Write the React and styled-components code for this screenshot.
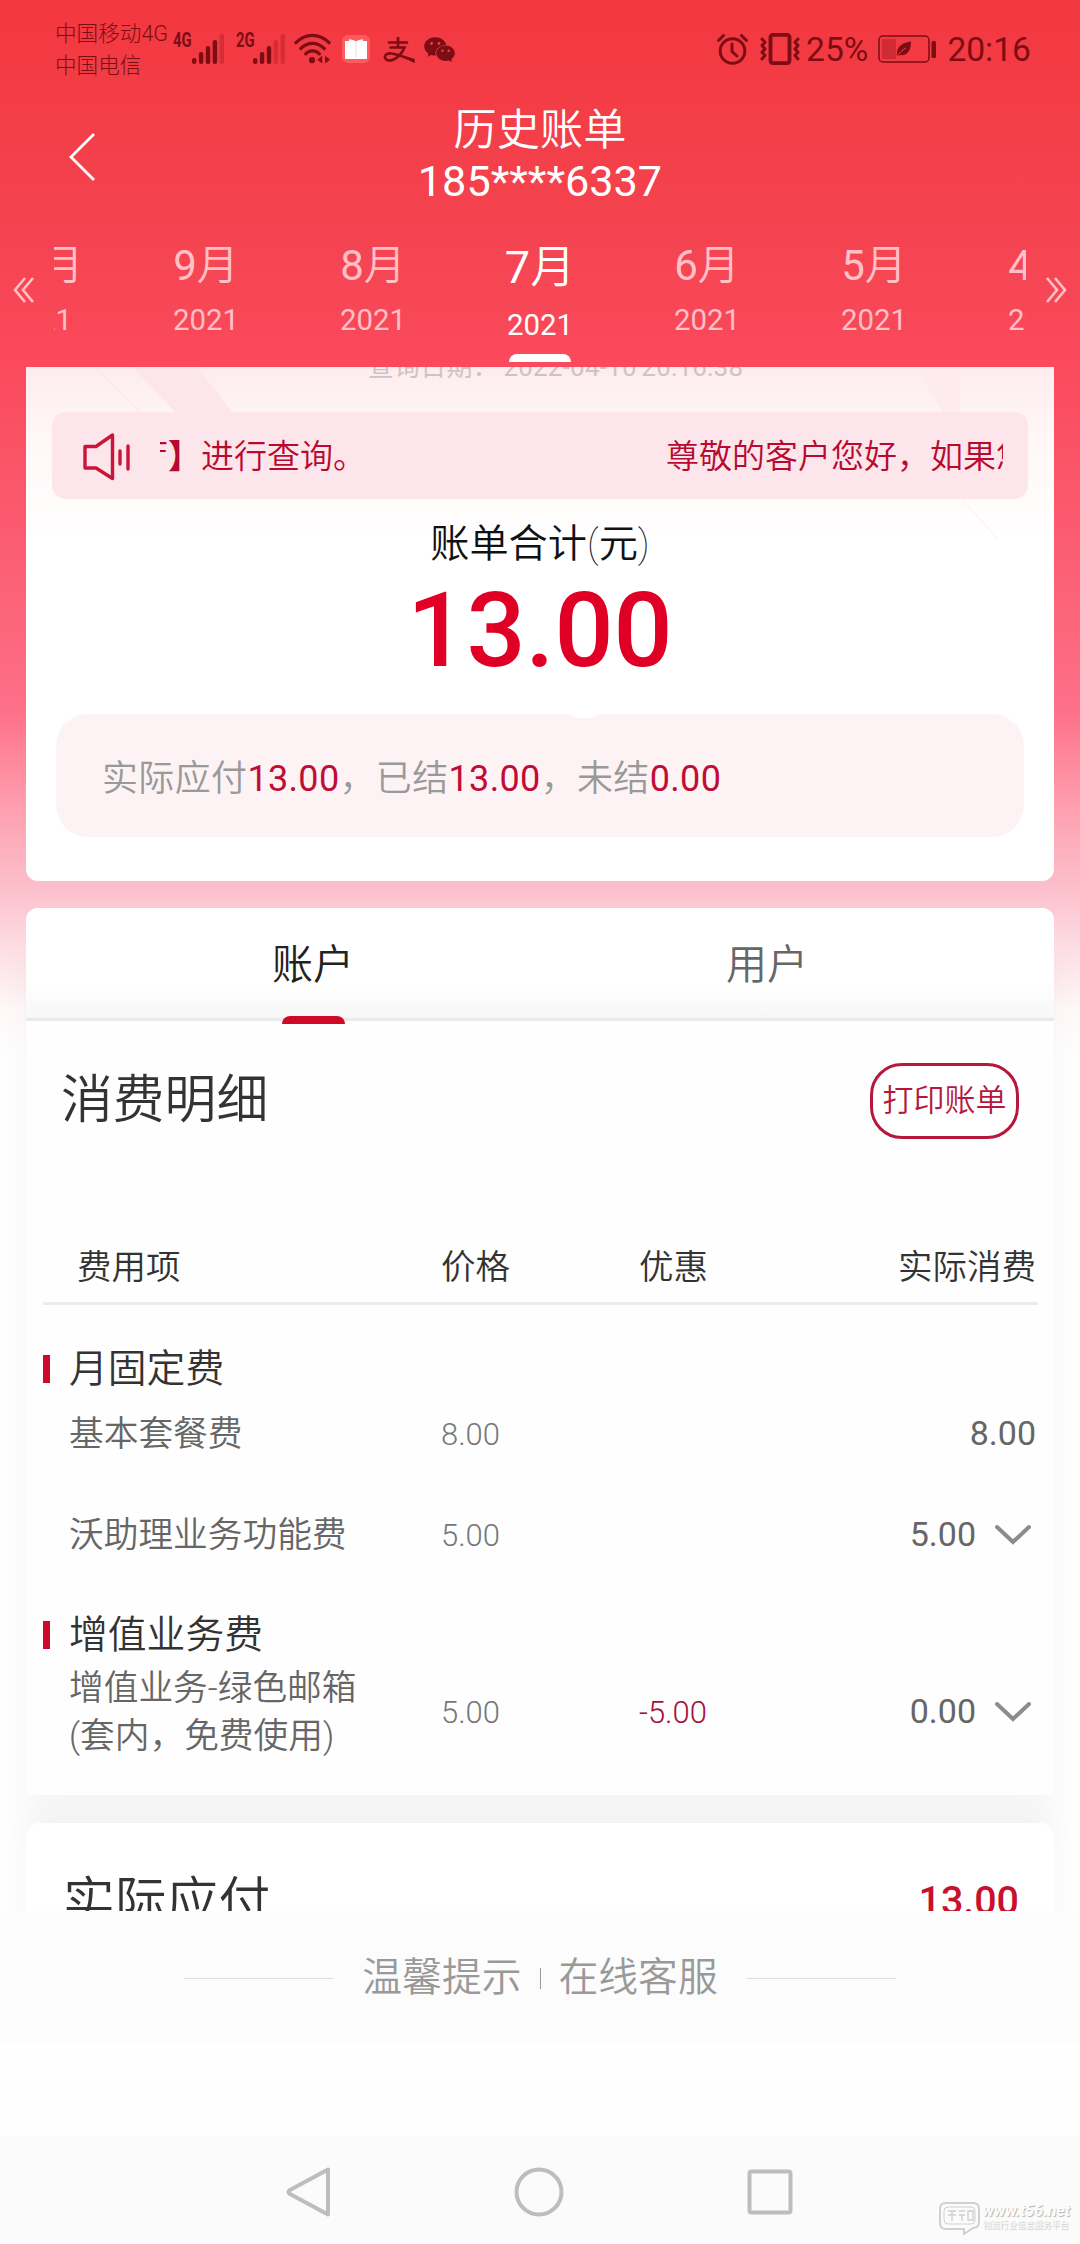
import React, { useState } from "react";
import styled, { createGlobalStyle } from "styled-components";
import { AiFillWechat } from "react-icons/ai";

const months = [
  { id: 10, year: "2021" },
  { id: 9, year: "2021" },
  { id: 8, year: "2021" },
  { id: 7, year: "2021" },
  { id: 6, year: "2021" },
  { id: 5, year: "2021" },
  { id: 4, year: "2021" },
];

const groups = [
  {
    name: "月固定费",
    rows: [
      { name: ["基本套餐费"], price: "8.00", off: "", real: "8.00", height: 80 },
      { name: ["沃助理业务功能费"], price: "5.00", off: "", real: "5.00", more: true, height: 122 },
    ],
  },
  {
    name: "增值业务费",
    rows: [
      {
        name: ["增值业务-绿色邮箱", "(套内，免费使用)"],
        price: "5.00",
        off: "-5.00",
        real: "0.00",
        more: true,
        height: 104,
      },
    ],
  },
];

function Signal({ on }) {
  return (
    <svg width="32" height="30" viewBox="0 0 32 30">
      {[6, 12, 18, 24, 30].map((h, i) => (
        <rect
          key={h}
          x={i * 6.9}
          y={30 - h}
          width="4.400"
          height={h}
          rx="2"
          fill="#7c0d14"
          opacity={i < on ? 1 : 0.25}
        />
      ))}
    </svg>
  );
}

function StatusBar() {
  return (
    <Status>
      <Carriers>
        <span>中国移动4G</span>
        <span>中国电信</span>
      </Carriers>
      <Net>4G</Net>
      <Signal on={4} />
      <Net $left={12}>2G</Net>
      <Signal on={3} />
      <WifiIcon width="37" height="32" viewBox="0 0 38 32" fill="none" stroke="#7c0d14" strokeWidth="3.4" strokeLinecap="round">
        <path d="M2 9.5C12-.5 26-.5 36 9.5" />
        <path d="M7 15.5c7-7 17-7 24 0" />
        <path d="M12 21c4-4 10-4 14 0" />
        <circle cx="18.5" cy="27.5" r="3.2" fill="#7c0d14" stroke="none" />
        <path d="M29 23v8l-5-4zM32 23l5 4-5 4z" fill="#7c0d14" stroke="none" />
      </WifiIcon>
      <BookIcon width="28" height="28" viewBox="0 0 28 28">
        <rect width="28" height="28" rx="6" fill="#fb5a5f" />
        <path d="M3 6h4V4.500c3 0 5 .5 7 2 2-1.500 4-2 7-2V6h4v18H3z" fill="#fff" />
        <path d="M14 6.500V23" stroke="#f9d5d9" strokeWidth="1" />
      </BookIcon>
      <PayIcon width="32" height="26" viewBox="0 0 32 26" fill="none" stroke="#7c0d14" strokeWidth="2.6" strokeLinecap="round">
        <path d="M6 5.500h18M15 1v9M7.500 10.500h14C19 17 13 23 7 23.500c-7 .3-7-8 1.500-7 7 1 13 4 21 6.500" />
        <path d="M19 19l12 3.500v2.500z" fill="#7c0d14" strokeWidth="1.500" />
      </PayIcon>
      <AiFillWechat size={35} color="#7c0d14" />
      <Spacer />
      <svg width="31" height="31" viewBox="0 0 31 31" fill="none" stroke="#7c0d14" strokeWidth="3" strokeLinecap="round">
        <circle cx="15.500" cy="17" r="12.300" />
        <path d="M15 10v7.500l5 4.500M1.500 6.500l5-5M29.500 6.500l-5-5" />
      </svg>
      <VibrateIcon width="42" height="32" viewBox="0 0 42 32" fill="none" stroke="#7c0d14" strokeWidth="3" strokeLinejoin="round" strokeLinecap="round">
        <rect x="11.500" y="1.800" width="19" height="28.400" rx="2.500" strokeWidth="3.800" />
        <path d="M3 6l3 3.300-3 3.300 3 3.400-3 3.300 3 3.300-3 3.300M39 6l-3 3.300 3 3.300-3 3.400 3 3.300-3 3.300 3 3.300" />
      </VibrateIcon>
      <Big>25%</Big>
      <BatteryIcon width="59" height="28" viewBox="0 0 59 28">
        <rect x="1" y="1" width="50" height="26" rx="4" fill="none" stroke="#7c0d14" strokeWidth="1.500" />
        <rect x="4" y="4" width="14" height="20" fill="#7c0d14" opacity=".3" />
        <path d="M19 22c-1-9 3-14 14-15.500C33 16 29 21 22 20z" fill="#7c0d14" />
        <path d="M19 22c2-4 5-7 9-9" stroke="#f3373f" strokeWidth="1" fill="none" />
        <rect x="53.500" y="6" width="4.500" height="17" rx="1.500" fill="#7c0d14" />
      </BatteryIcon>
      <Big>20:16</Big>
    </Status>
  );
}

function Arrow({ flip }) {
  return (
    <ArrowSvg $flip={flip} width="22" height="26" viewBox="0 0 22 26" fill="none" stroke="#ffc0c6" strokeWidth="2.600">
      <path d="M12 1L2 13l10 12M20 1L10 13l10 12" />
    </ArrowSvg>
  );
}

function FeeRow({ row }) {
  return (
    <Row $height={row.height}>
      <FeeName>
        {row.name.map((line) => (
          <div key={line}>{line}</div>
        ))}
      </FeeName>
      <Price>{row.price}</Price>
      <Price $red>{row.off}</Price>
      <Real $more={row.more}>
        {row.real}
        {row.more && (
          <svg width="38" height="24" viewBox="0 0 38 24" fill="none" stroke="#8c8c8c" strokeWidth="4" strokeLinecap="round">
            <path d="M3 5l16 15L35 5" />
          </svg>
        )}
      </Real>
    </Row>
  );
}

export default function App() {
  const [month, setMonth] = useState(7);
  const [tab, setTab] = useState("账户");

  return (
    <Page>
      <GlobalStyle />
      <StatusBar />
      <TitleBar>
        <BackIcon width="28" height="50" viewBox="0 0 28 50" fill="none" stroke="#fff" strokeWidth="2.800">
          <path d="M26 2L3 25l23 23" />
        </BackIcon>
        <Titles>
          <PageTitle>历史账单</PageTitle>
          <Phone>185****6337</Phone>
        </Titles>
      </TitleBar>

      <MonthBar>
        <Arrow />
        <MonthClip>
          <MonthTrack>
            {months.map((m) => (
              <Month key={m.id} $on={m.id === month} onClick={() => setMonth(m.id)}>
                <MonthName $on={m.id === month}>
                  <b>{m.id}</b>月
                </MonthName>
                <Year $on={m.id === month}>{m.year}</Year>
                {m.id === month && <MonthMark />}
              </Month>
            ))}
          </MonthTrack>
        </MonthClip>
        <Arrow flip />
      </MonthBar>

      <Scroll>
        <TotalCard>
          <Stripes width="1028" height="180" viewBox="0 0 1028 180">
            <path d="M107 0h64l35 45h-57z" fill="#fde6ea" />
            <path d="M70 0l44 46" stroke="#fbe3e7" fill="none" />
            <path d="M888 0h46v46h-16z" fill="#fdebef" />
            <path d="M936 132l36 40" stroke="#fbeef0" fill="none" />
          </Stripes>
          <QueryDate>查询日期： 2022-04-10 20:16:38</QueryDate>
          <Notice>
            <svg width="48" height="48" viewBox="0 0 48 48" fill="none" stroke="#cb1438" strokeWidth="3.400" strokeLinejoin="round" strokeLinecap="round">
              <path d="M2 13.500h11L29.500 2v43.500L13 35H2zM37 18v13M45 13v23" />
            </svg>
            <Marquee>
              <MarqueeEnd>
                厅<b>】</b>进行查询。
              </MarqueeEnd>
              <span>尊敬的客户您好，如果您</span>
            </Marquee>
          </Notice>
          <TotalLabel>
            账单合计<Thin>(</Thin>元<Thin>)</Thin>
          </TotalLabel>
          <Total>13.00</Total>
          <Summary>
            <Notch />
            实际应付<b>13.00</b>，已结<b>13.00</b>，未结<b>0.00</b>
          </Summary>
        </TotalCard>

        <DetailCard>
          <Tabs>
            {["账户", "用户"].map((t) => (
              <Tab key={t} $on={t === tab} onClick={() => setTab(t)}>
                <TabText>{t}</TabText>
                {t === tab && <TabMark />}
              </Tab>
            ))}
          </Tabs>
          <DetailHead>
            <Heading>消费明细</Heading>
            <PrintButton>打印账单</PrintButton>
          </DetailHead>
          <TableHead>
            <HeadName>费用项</HeadName>
            <span>价格</span>
            <span>优惠</span>
            <HeadReal>实际消费</HeadReal>
          </TableHead>
          {groups.map((g) => (
            <Group key={g.name}>
              <GroupName>{g.name}</GroupName>
              {g.rows.map((r) => (
                <FeeRow key={r.name[0]} row={r} />
              ))}
            </Group>
          ))}
        </DetailCard>

        <PayCard>
          <Heading>实际应付</Heading>
          <PayAmount>13.00</PayAmount>
        </PayCard>
      </Scroll>

      <Footer>
        <Line />
        <span>温馨提示</span>
        <Divider />
        <span>在线客服</span>
        <Line />
      </Footer>

      <NavBar>
        <svg width="46" height="52" viewBox="0 0 46 52" fill="none" stroke="#bdbdbd" strokeWidth="4" strokeLinejoin="round">
          <path d="M43 3.500v45L5 28q-3-2 0-4z" />
        </svg>
        <svg width="52" height="52" viewBox="0 0 52 52" fill="none" stroke="#bdbdbd" strokeWidth="4">
          <circle cx="26" cy="26" r="22.500" />
        </svg>
        <svg width="46" height="52" viewBox="0 0 46 52" fill="none" stroke="#bdbdbd" strokeWidth="4">
          <rect x="2.500" y="5.500" width="41" height="41" rx="2" />
        </svg>
        <Watermark>
          <svg width="44" height="36" viewBox="0 0 44 36" fill="none" stroke="#d0d0d0" strokeWidth="2">
            <path d="M8 2h27q6 0 6 6v13q0 6-6 6l-9 6v-5H8q-6 0-6-6V8q0-6 6-6z" />
            <rect x="6" y="6" width="31" height="17" rx="4" strokeWidth="1" />
            <path d="M10 10h8M14 10v10M10 14h8M21 10h6M21 14h6M24 14v6M30 10h5v9h-5z" strokeWidth="1.400" />
          </svg>
          <WaterText>
            <b>www.t56.net</b>
            <small>物流行业信息服务平台</small>
          </WaterText>
        </Watermark>
      </NavBar>
    </Page>
  );
}

const GlobalStyle = createGlobalStyle`
  * {
    box-sizing: border-box;
  }
  body {
    margin: 0;
    font-family: Roboto, "Noto Sans CJK SC", sans-serif;
    font-weight: 350;
  }
  svg {
    display: block;
    flex-shrink: 0;
  }
`;

const Page = styled.div`
  width: 1080px;
  height: 2244px;
  overflow: hidden;
  display: flex;
  flex-direction: column;
  background: linear-gradient(
      #f3373f 0,
      #f4434f 220px,
      #fa4a5c 366px,
      #fb5a6e 520px,
      #fd7088 710px,
      #fea0b0 810px,
      #fcc0cc 890px,
      #fddfe5 950px,
      #fff8f9 1010px,
      #fefefe 1060px
    )
    no-repeat #fefefe;
`;

const Status = styled.div`
  height: 98px;
  flex-shrink: 0;
  display: flex;
  align-items: center;
  padding: 0 49px 0 55px;
  color: #7c0d14;
`;

const Carriers = styled.div`
  display: flex;
  flex-direction: column;
  width: 118px;
  padding-top: 2px;
  font-size: 21.6px;
  line-height: 32px;
  font-weight: 300;
  white-space: nowrap;
`;

const Net = styled.span`
  width: ${(p) => (p.$left ? 17 : 19)}px;
  margin-left: ${(p) => p.$left || 0}px;
  align-self: flex-start;
  padding-top: 30px;
  font-size: 20px;
  line-height: 20px;
  font-weight: 700;
  transform: scaleX(0.74);
  transform-origin: left;
`;

const WifiIcon = styled.svg`
  margin-left: 9px;
`;

const BookIcon = styled.svg`
  margin-left: 11px;
`;

const PayIcon = styled.svg`
  margin: 2px 7px 0 13px;
`;

const Spacer = styled.div`
  flex: 1;
`;

const VibrateIcon = styled.svg`
  margin: 0 5px 0 11px;
`;

const Big = styled.span`
  font-size: 33.6px;
  font-weight: 400;
`;

const BatteryIcon = styled.svg`
  margin: 0 10px;
`;

const TitleBar = styled.div`
  height: 126px;
  flex-shrink: 0;
  display: flex;
  padding: 0 68px;
`;

const BackIcon = styled.svg`
  margin-top: 34px;
`;

const Titles = styled.div`
  flex: 1;
  margin-right: 28px;
  display: flex;
  flex-direction: column;
  align-items: center;
  color: #fff;
  font-size: 43.2px;
`;

const PageTitle = styled.div`
  padding-top: 4px;
  line-height: 58px;
`;

const Phone = styled.div`
  font-weight: 400;
  line-height: 44px;
`;

const MonthBar = styled.div`
  height: 143px;
  flex-shrink: 0;
  display: flex;
  padding: 0 13px;
  justify-content: space-between;
`;

const ArrowSvg = styled.svg`
  margin-top: 53px;
  transform: ${(p) => (p.$flip ? "scaleX(-1)" : "none")};
`;

const MonthClip = styled.div`
  width: 972px;
  overflow: hidden;
  display: flex;
  justify-content: center;
`;

const MonthTrack = styled.div`
  display: flex;
  flex-shrink: 0;
`;

const Month = styled.div`
  width: 167px;
  display: flex;
  flex-direction: column;
  align-items: center;
  padding-top: ${(p) => (p.$on ? 13 : 11)}px;
  color: ${(p) => (p.$on ? "#fff" : "#ffc0c6")};
`;

const MonthName = styled.div`
  font-size: ${(p) => (p.$on ? 45 : 42)}px;
  line-height: 62px;

  b {
    font-weight: 400;
  }
`;

const Year = styled.div`
  font-size: 29.4px;
  font-weight: 400;
  line-height: 40px;
  margin-top: ${(p) => (p.$on ? 6 : 3)}px;
`;

const MonthMark = styled.div`
  width: 62px;
  height: 8px;
  margin-top: 9px;
  border-radius: 8px 8px 0 0;
  background: #fff;
`;

const Scroll = styled.div`
  height: 1544px;
  flex-shrink: 0;
  overflow: hidden;
  padding: 0 26px;
`;

const TotalCard = styled.div`
  position: relative;
  height: 514px;
  padding: 0 26px;
  border-radius: 0 0 12px 12px;
  background: linear-gradient(#fdecef 0, #fff7f8 70px, #fffcfc 140px, #fff 170px);
`;

const Stripes = styled.svg`
  position: absolute;
  top: 0;
  left: 0;
`;

const QueryDate = styled.div`
  position: relative;
  height: 45px;
  padding-left: 31px;
  overflow: hidden;
  text-align: center;
  font-size: 26px;
  font-weight: 400;
  letter-spacing: 0.2px;
  word-spacing: -2px;
  line-height: 0;
  color: #cdc3c5;
`;

const Notice = styled.div`
  position: relative;
  height: 87px;
  display: flex;
  align-items: center;
  padding: 2px 25px 0 31px;
  border-radius: 14px;
  background: #fde6eb;
`;

const Marquee = styled.div`
  flex: 1;
  margin-left: 29px;
  overflow: hidden;
  white-space: nowrap;
  font-size: 33px;
  line-height: 50px;
  color: #b80a30;
  display: flex;

  span {
    flex-shrink: 0;
  }
`;

const MarqueeEnd = styled.span`
  width: 531px;
  margin-left: -25px;

  b {
    font-weight: 900;
  }
`;

const TotalLabel = styled.div`
  margin-top: 17px;
  text-align: center;
  font-size: 39.2px;
  line-height: 56px;
  color: #111;
`;

const Thin = styled.span`
  font-weight: 100;
`;

const Total = styled.div`
  margin-top: -1px;
  text-align: center;
  font-size: 104px;
  font-weight: 500;
  line-height: 120px;
  color: #e00025;
`;

const Summary = styled.div`
  position: relative;
  margin: 23px 4px 0;
  height: 123px;
  padding-left: 46px;
  border-radius: 32px;
  background: #fdf3f5;
  font-size: 36px;
  letter-spacing: 0.34px;
  line-height: 130px;
  color: #999;

  b {
    font-weight: 400;
    color: #c00d35;
  }
`;

const Notch = styled.div`
  position: absolute;
  top: -4px;
  left: 514px;
  width: 28px;
  height: 8px;
  border-radius: 50%;
  background: #fff;
`;

const DetailCard = styled.div`
  height: 887px;
  margin-top: 27px;
  padding: 0 16px 0 17px;
  border-radius: 12px 12px 0 0;
  background: #fefefe;
  box-shadow: 0 40px 30px rgba(0, 0, 0, 0.034);
`;

const Tabs = styled.div`
  height: 113px;
  margin: 0 -16px 0 -17px;
  padding: 0 60px;
  display: flex;
  border-bottom: 3px solid #ebebeb;
  border-radius: 12px 12px 0 0;
  background: linear-gradient(#fff 75px, #f7f7f8);
`;

const Tab = styled.div`
  flex: 1;
  display: flex;
  flex-direction: column;
  align-items: center;
  color: ${(p) => (p.$on ? "#222" : "#666")};
`;

const TabText = styled.div`
  height: 108px;
  font-size: 41px;
  line-height: 114px;
`;

const TabMark = styled.div`
  width: 63px;
  height: 8px;
  flex-shrink: 0;
  border-radius: 8px 8px 0 0;
  background: #ce0a26;
`;

const DetailHead = styled.div`
  height: 160px;
  display: flex;
  justify-content: space-between;
  align-items: center;
  padding: 0 19px 0 18px;
`;

const Heading = styled.div`
  font-size: 51.8px;
  line-height: 70px;
  color: #333;
`;

const PrintButton = styled.button`
  width: 149px;
  height: 76px;
  padding: 0 0 7px;
  border: 3px solid #b5183c;
  border-radius: 32px;
  background: #fff;
  font-family: inherit;
  font-weight: inherit;
  font-size: 31px;
  color: #b5183c;
`;

const TableHead = styled.div`
  height: 124px;
  display: grid;
  grid-template-columns: 398px 198px 1fr 160px;
  align-items: end;
  border-bottom: 3px solid #ebebeb;
  padding-bottom: 10px;
  font-size: 34.5px;
  line-height: 50px;
  color: #333;
`;

const HeadName = styled.span`
  padding-left: 34px;
`;

const HeadReal = styled.span`
  padding-right: 2px;
  text-align: right;
  white-space: nowrap;
`;

const Group = styled.div`
  padding-top: 39px;

  & + & {
    padding-top: 14px;
  }
`;

const GroupName = styled.div`
  display: flex;
  align-items: center;
  height: 50px;
  font-size: 38.8px;
  line-height: 50px;
  color: #333;

  &::before {
    content: "";
    width: 7px;
    height: 28px;
    margin-right: 19px;
    background: #ce0a2c;
  }
`;

const Row = styled.div`
  height: ${(p) => p.$height}px;
  display: grid;
  grid-template-columns: 398px 198px 1fr 160px;
  align-items: center;
`;

const FeeName = styled.div`
  padding-left: 26px;
  font-size: 34.7px;
  line-height: 48px;
  color: #666;
`;

const Price = styled.div`
  font-size: 31px;
  font-weight: 300;
  color: ${(p) => (p.$red ? "#a3103c" : "#777")};
`;

const Real = styled.div`
  display: flex;
  justify-content: flex-end;
  align-items: center;
  gap: 18px;
  padding: 0 ${(p) => (p.$more ? 6 : 2)}px 2px 0;
  font-size: 34px;
  font-weight: 400;
  color: #666;
`;

const PayCard = styled.div`
  height: 200px;
  margin-top: 28px;
  padding: 45px 35px 0 37px;
  display: flex;
  justify-content: space-between;
  border-radius: 14px 14px 0 0;
  background: #fff;
  position: relative;
  box-shadow: 0 0 30px rgba(0, 0, 0, 0.03);
`;

const PayAmount = styled.div`
  font-size: 39.4px;
  font-weight: 500;
  line-height: 66px;
  color: #c8102e;
`;

const Footer = styled.div`
  height: 131px;
  flex-shrink: 0;
  display: flex;
  justify-content: center;
  align-items: center;
  padding-top: 3px;
  background: #fcfcfc;
  font-size: 39.8px;
  line-height: 60px;
  color: #999;
`;

const Line = styled.div`
  width: 149px;
  height: 1px;
  margin: 0 29px;
  background: #dcdcdc;
`;

const Divider = styled.div`
  width: 1px;
  height: 21px;
  margin: 0 18px;
  background: #999;
`;

const NavBar = styled.div`
  position: relative;
  height: 107px;
  flex-shrink: 0;
  margin-top: 95px;
  padding: 2px 287px 0 285px;
  display: flex;
  justify-content: space-between;
  align-items: center;
  background: #fbfbfb;
`;

const Watermark = styled.div`
  position: absolute;
  right: 10px;
  bottom: 7px;
  display: flex;
`;

const WaterText = styled.div`
  display: flex;
  flex-direction: column;
  padding-top: 1px;
  font-size: 16px;
  line-height: 17px;
  color: #fdfdfd;
  text-shadow: 1px 1px 1px #b4b4b4;

  b {
    font-style: italic;
    font-weight: 700;
  }

  small {
    font-size: 8.6px;
    line-height: 12px;
  }
`;
